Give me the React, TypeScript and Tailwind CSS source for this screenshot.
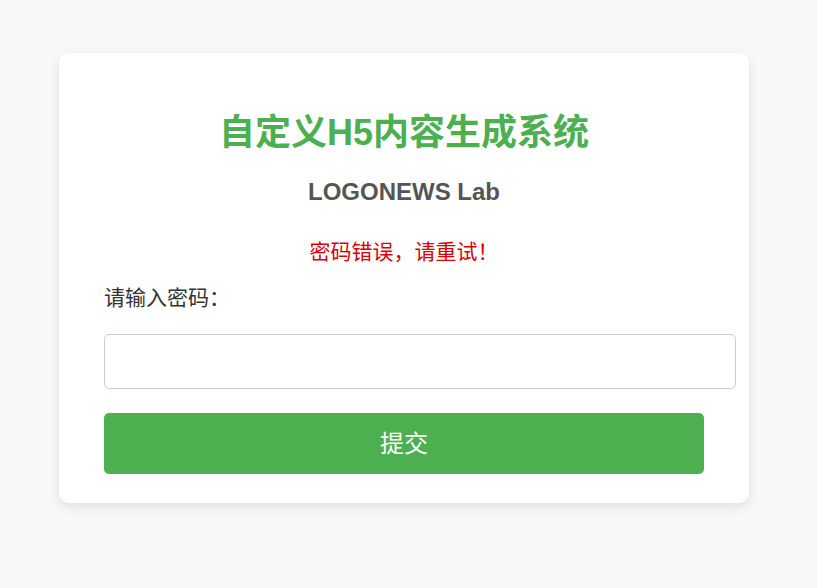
import React from 'react';

const font = "font-['Liberation_Sans','Noto_Sans_CJK_SC',sans-serif]";

export default function App() {
  return (
    <div className={`min-h-screen bg-[#f8f8f8] pt-[53px] pb-10 ${font}`}>
      {/* Login card */}
      <div className="ml-[59px] w-[690px] rounded-[10px] bg-white px-[45px] pt-[30px] pb-[29px] shadow-[0_4px_12px_rgba(0,0,0,0.1)]">
        <h1 className="mt-[28px] text-center text-[36px] font-bold leading-[44px] text-[#4caf50]">
          自定义H5内容生成系统
        </h1>
        <h2 className="mt-[22px] text-center text-[24px] font-bold leading-[30px] text-[#555]">
          LOGONEWS Lab
        </h2>
        <p className="mt-[31px] text-center text-[21px] leading-[28px] text-[#e00000]">
          密码错误，请重试！
        </p>

        <form onSubmit={(e) => e.preventDefault()}>
          <label htmlFor="pwd" className="mt-[18px] block text-[21px] leading-[28px] text-[#333]">
            请输入密码：
          </label>
          <input
            id="pwd"
            type="password"
            className="mt-[22px] box-content block h-[53px] w-[600px] rounded-[5px] border border-[#ccc] px-[15px] py-0 text-[18px] outline-none"
          />
          <button
            type="submit"
            className="mt-[24px] block h-[61px] w-full rounded-[5px] bg-[#4caf50] text-[24px] text-white"
          >
            提交
          </button>
        </form>
      </div>
    </div>
  );
}
